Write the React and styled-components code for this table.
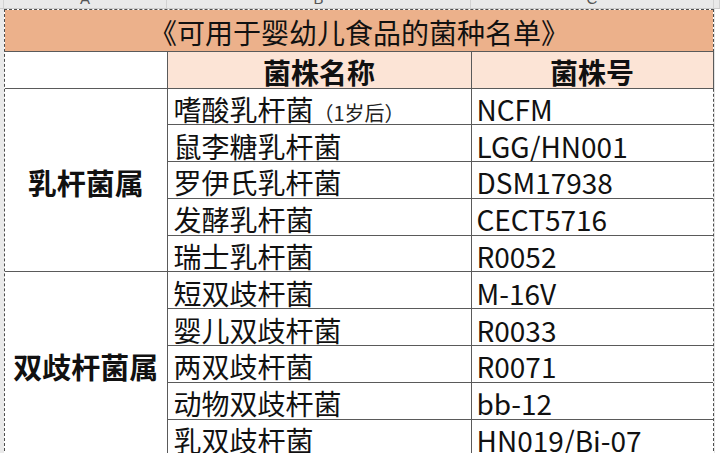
import styled, { createGlobalStyle } from "styled-components"

const GlobalStyle = createGlobalStyle`
  html, body {
    margin: 0;
    padding: 0;
    background: #fff;
  }
  body {
    font-family: "Noto Sans CJK SC", "Noto Sans", sans-serif;
    color: #111;
  }
`

const Sheet = styled.div`
  display: flex;
  flex-direction: column;
  width: 720px;
  height: 453px;
  overflow: hidden;
  background: #fff;
`

const ColumnBar = styled.div`
  display: grid;
  grid-template-columns: 4px 163px 304px 243px 1fr;
  flex-shrink: 0;
  height: 9px;
  box-sizing: border-box;
  background: #e9e9e9;
  border-bottom: 1px solid #cbcbcb;
  overflow: hidden;
`

const ColLetter = styled.div`
  display: flex;
  justify-content: center;
  align-items: flex-end;
  padding-bottom: 2px;
  border-right: 1px solid #d2d2d2;
  font-family: "Liberation Sans", sans-serif;
  font-size: 15px;
  line-height: 15px;
  color: #555;
  overflow: hidden;
`

const Body = styled.div`
  display: flex;
  flex: 1;
`

const RowGutter = styled.div`
  flex-shrink: 0;
  width: 4px;
  background: #eaeaea;
`

const Marquee = styled.div`
  flex-shrink: 0;
  width: 710px;
  box-sizing: border-box;
  border: 1px dashed #4d4d4d;
  border-bottom: none;
`

const Filler = styled.div`
  flex: 1;
  border-left: 1px solid #e4e4e4;
`

const Grid = styled.table`
  width: 708px;
  table-layout: fixed;
  border-collapse: collapse;
  border-spacing: 0;
`

const Row = styled.tr`
  height: ${p => p.$h}px;
`

const TitleCell = styled.td`
  padding: 4px 0 0;
  background: #ecb18b;
  border-bottom: 1px solid #5a5a5a;
  text-align: center;
  font-size: 28px;
  line-height: 1;
  white-space: nowrap;
`

const HeadCell = styled.td`
  padding: 4px 0 0;
  background: ${p => (p.$blank ? "#fff" : "#fce4d6")};
  border: 1px solid #5a5a5a;
  border-left: ${p => (p.$blank ? "none" : "1px solid #5a5a5a")};
  text-align: center;
  font-size: 28px;
  font-weight: 700;
  line-height: 1;
`

const GroupCell = styled.td`
  padding: 5px 0 0;
  border-bottom: 1px solid #5a5a5a;
  border-right: 1px solid #5a5a5a;
  text-align: center;
  vertical-align: middle;
  font-size: 29px;
  font-weight: 700;
  line-height: 1;
  white-space: nowrap;
`

const Cell = styled.td`
  padding: 5px 0 0 ${p => (p.$code ? 5 : 6)}px;
  border-bottom: 1px solid #5a5a5a;
  border-right: ${p => (p.$code ? "none" : "1px solid #5a5a5a")};
  font-size: 28px;
  line-height: 1;
  white-space: nowrap;
  overflow: hidden;
`

const Note = styled.span`
  font-size: 20px;
  color: #222;
`

const groups = [
  {
    name: "乳杆菌属",
    items: [
      ["嗜酸乳杆菌", "NCFM", "（1岁后）"],
      ["鼠李糖乳杆菌", "LGG/HN001"],
      ["罗伊氏乳杆菌", "DSM17938"],
      ["发酵乳杆菌", "CECT5716"],
      ["瑞士乳杆菌", "R0052"],
    ],
  },
  {
    name: "双歧杆菌属",
    items: [
      ["短双歧杆菌", "M-16V"],
      ["婴儿双歧杆菌", "R0033"],
      ["两双歧杆菌", "R0071"],
      ["动物双歧杆菌", "bb-12"],
      ["乳双歧杆菌", "HN019/Bi-07"],
    ],
  },
]

export default function App() {
  return (
    <Sheet>
      <GlobalStyle />
      <ColumnBar>
        <ColLetter />
        <ColLetter>A</ColLetter>
        <ColLetter>B</ColLetter>
        <ColLetter>C</ColLetter>
        <ColLetter />
      </ColumnBar>
      <Body>
        <RowGutter />
        <Marquee>
          <Grid>
            <colgroup>
              <col style={{ width: 162 }} />
              <col style={{ width: 304 }} />
              <col style={{ width: 242 }} />
            </colgroup>
            <tbody>
              <Row $h={41}>
                <TitleCell colSpan={3}>《可用于婴幼儿食品的菌种名单》</TitleCell>
              </Row>
              <Row $h={37}>
                <HeadCell $blank />
                <HeadCell>菌株名称</HeadCell>
                <HeadCell>菌株号</HeadCell>
              </Row>
              {groups.map(group =>
                group.items.map(([name, code, note], i) => (
                  <Row $h={36.8} key={name}>
                    {i === 0 && (
                      <GroupCell rowSpan={group.items.length}>{group.name}</GroupCell>
                    )}
                    <Cell>
                      {name}
                      {note && <Note>{note}</Note>}
                    </Cell>
                    <Cell $code>{code}</Cell>
                  </Row>
                ))
              )}
            </tbody>
          </Grid>
        </Marquee>
        <Filler />
      </Body>
    </Sheet>
  )
}
